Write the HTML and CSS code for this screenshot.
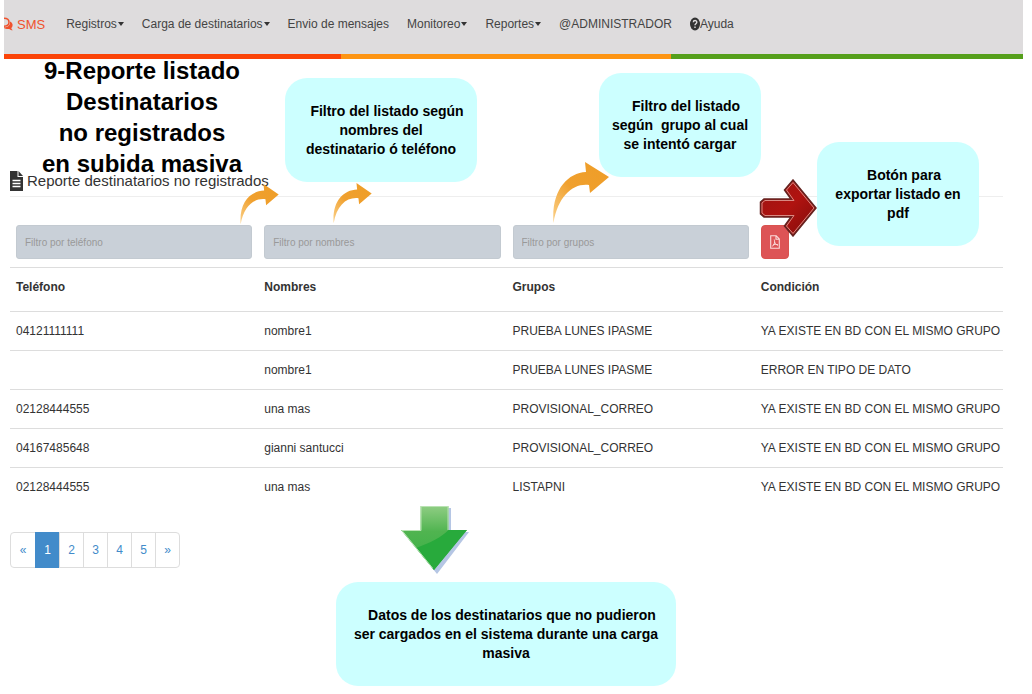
FILE: index.html
```html
<!DOCTYPE html>
<html lang="es">
<head>
<meta charset="utf-8">
<title>Reporte destinatarios no registrados</title>
<link rel="stylesheet" href="styles.css">
</head>
<body>
<header class="topbar">
  <nav class="nav">
    <a class="brand" href="#">
      <svg class="brand-icon" viewBox="0 0 9 16" aria-hidden="true"><path d="M0 2.300C3 2.300 5 4 5 6.300S3 10.200 0 10.200" fill="none" stroke="#f0522d" stroke-width="1.500"/><path d="M6 5.500C8 6.500 9 8 8.500 10c-.2 1-.7 1.600-1.200 2 .1 1 .7 1.500 1.500 2.300-1.500 0-2.600-.5-3.500-1.300-2 .2-4 0-5.300-1v-.8C3.500 11.500 6.500 9.500 6 5.500z" fill="#f0522d"/></svg>
      <span>SMS</span>
    </a>
    <a class="nav-link" href="#">Registros<i class="caret"></i></a>
    <a class="nav-link" href="#">Carga de destinatarios<i class="caret"></i></a>
    <a class="nav-link" href="#">Envio de mensajes</a>
    <a class="nav-link" href="#">Monitoreo<i class="caret"></i></a>
    <a class="nav-link" href="#">Reportes<i class="caret"></i></a>
    <a class="nav-link" href="#">@ADMINISTRADOR</a>
    <a class="nav-link" href="#"><svg class="help-icon" viewBox="0 0 10 14" aria-hidden="true"><ellipse cx="5" cy="7" rx="5" ry="6.500" fill="#333"/><path d="M3.300 5.200C3.400 3 6.800 3 6.800 5.200 6.800 6.800 5 6.800 5 8.300M5 9.500v1.500" fill="none" stroke="#dedcdd" stroke-width="1.400"/></svg>Ayuda</a>
  </nav>
  <div class="stripe"><span class="red"></span><span class="orange"></span><span class="green"></span></div>
</header>

<main class="content">
  <h1 class="page-title">
    <svg class="file-icon" viewBox="0 0 13 20" aria-hidden="true"><path d="M0 0h7.500v6H13v14H0z" fill="#333"/><path d="M8.500 0L13 5H8.500z" fill="#333"/><path d="M2.500 9.500h8M2.500 12.500h8M2.500 15.500h8" stroke="#fff" stroke-width="1.300"/></svg>
    Reporte destinatarios no registrados
  </h1>
  <form class="filters">
    <div class="cell"><input class="filter" type="text" aria-label="Filtro por teléfono" placeholder="Filtro por teléfono"></div>
    <div class="cell"><input class="filter" type="text" aria-label="Filtro por nombres" placeholder="Filtro por nombres"></div>
    <div class="cell"><input class="filter" type="text" aria-label="Filtro por grupos" placeholder="Filtro por grupos"></div>
    <div class="cell"><button class="pdf" type="button" aria-label="Exportar a pdf"><svg class="pdf-icon" viewBox="0 0 10 14" aria-hidden="true"><path d="M.7.700h5.500L9.300 4v9.300H.700zM6 1v3.300h3" fill="none" stroke="#fbdcdc" stroke-width="1.100"/><path d="M4.200 4.500C5.500 8 3.500 10.500 2 11.500M4.500 7c1 2 2 3 3.500 3M3 10c1.500-.8 3-.8 5 0" fill="none" stroke="#fbdcdc"/></svg></button></div>
  </form>
  <table class="report">
    <thead>
      <tr><th>Teléfono</th><th>Nombres</th><th>Grupos</th><th>Condición</th></tr>
    </thead>
    <tbody>
      <tr><td>04121111111</td><td>nombre1</td><td>PRUEBA LUNES IPASME</td><td>YA EXISTE EN BD CON EL MISMO GRUPO</td></tr>
      <tr><td></td><td>nombre1</td><td>PRUEBA LUNES IPASME</td><td>ERROR EN TIPO DE DATO</td></tr>
      <tr><td>02128444555</td><td>una mas</td><td>PROVISIONAL_CORREO</td><td>YA EXISTE EN BD CON EL MISMO GRUPO</td></tr>
      <tr><td>04167485648</td><td>gianni santucci</td><td>PROVISIONAL_CORREO</td><td>YA EXISTE EN BD CON EL MISMO GRUPO</td></tr>
      <tr><td>02128444555</td><td>una mas</td><td>LISTAPNI</td><td>YA EXISTE EN BD CON EL MISMO GRUPO</td></tr>
    </tbody>
  </table>
  <nav class="pages" aria-label="Páginas">
    <a href="#">«</a><a class="current" href="#">1</a><a href="#">2</a><a href="#">3</a><a href="#">4</a><a href="#">5</a><a href="#">»</a>
  </nav>
</main>

<h2 class="slide-title">9-Reporte listado<br>Destinatarios<br>no registrados<br>en subida masiva</h2>

<p class="callout names">Filtro del listado según<br>nombres del<br>destinatario ó teléfono</p>
<p class="callout groups">Filtro del listado<br>según&nbsp; grupo al cual<br>se intentó cargar</p>
<p class="callout export">Botón para<br>exportar listado en<br>pdf</p>
<p class="callout data">Datos de los destinatarios que no pudieron<br>ser cargados en el sistema durante una carga<br>masiva</p>

<svg class="arrow curve-phone" viewBox="0 0 58 62" aria-hidden="true"><defs><linearGradient id="gold" x1="0" y1="1" x2="1" y2="0"><stop offset="0" stop-color="#fbd28b"/><stop offset=".45" stop-color="#f0a02e"/><stop offset="1" stop-color="#ee9d27"/></linearGradient></defs><path d="M.500 61C-2 29 14 11 36 10L35 0 58 16 39 32 38 23C20 21 5 34 .500 61z" fill="url(#gold)"/></svg>
<svg class="arrow curve-names" viewBox="0 0 58 62" aria-hidden="true"><path d="M.500 61C-2 29 14 11 36 10L35 0 58 16 39 32 38 23C20 21 5 34 .500 61z" fill="url(#gold)"/></svg>
<svg class="arrow curve-groups" viewBox="0 0 58 62" aria-hidden="true"><path d="M.500 61C-2 29 14 11 33 10L32 0 56 15 37 31 36 23C20 21 5 34 .500 61z" fill="url(#gold)"/></svg>
<svg class="arrow red-arrow" viewBox="0 0 58 58" aria-hidden="true"><defs><linearGradient id="crimson" x1="0" y1="0" x2="1" y2="1"><stop offset="0" stop-color="#9c1512"/><stop offset=".5" stop-color="#b01310"/><stop offset="1" stop-color="#7d0c0b"/></linearGradient></defs><path d="M5 20H32L25.500 11 34 1 57 29 34 57 25.500 47 32 38H5L1.500 35V23z" fill="url(#crimson)" stroke="#642320" stroke-width="1.500"/><path d="M6 21.500H35L27.500 11 34 3.500 55 29 34 54.500 27.500 47 35 36.500H6L3 34V24z" fill="none" stroke="#d98982" stroke-width="1"/></svg>
<svg class="arrow green-arrow" viewBox="0 0 70 70" aria-hidden="true"><defs><linearGradient id="leaf" x1="0" y1="0" x2="0" y2="1"><stop offset="0" stop-color="#8fcd83"/><stop offset=".4" stop-color="#50b450"/><stop offset="1" stop-color="#35b044"/></linearGradient></defs><path d="M23 3H51V27H69L37 69 3 27H23z" fill="#b5c6e4"/><path d="M20.500 1H48.500V25H67L34 65 1 25H20.500z" fill="url(#leaf)"/><path d="M48.500 25H67L34 65 16 43C30 38 42 32 48.500 25z" fill="#28aa3c"/><path d="M32.500 63L2 25.500H21V1.500H48V25" fill="none" stroke="#b8e3b2" stroke-width="1"/></svg>
</body>
</html>
```
FILE: styles.css
```css
* { box-sizing: border-box; }

body {
  margin: 0;
  min-height: 100vh;
  position: relative;
  background: #fff;
  color: #333;
  font-family: "Liberation Sans", Arial, sans-serif;
  font-size: 12px;
}

a { text-decoration: none; }

.topbar { margin: 0 9px 0 4px; background: #dedcdd; }

.nav {
  display: flex;
  align-items: center;
  gap: 18px;
  height: 54px;
  padding-bottom: 6px;
}

.brand { display: flex; align-items: center; gap: 4px; margin-right: 3px; color: #f0522d; font-size: 13px; }
.brand-icon { width: 9px; height: 16px; }
.nav-link { display: flex; align-items: center; color: #444; }
.help-icon { width: 10px; height: 14px; }

.caret {
  margin-left: 1px;
  border: 3px solid transparent;
  border-top: 4px solid #333;
  border-bottom: 0;
}

.stripe { display: flex; height: 5px; }
.stripe .red { flex: 337; background: #fb4408; }
.stripe .orange { flex: 330; background: #fd9412; }
.stripe .green { flex: 352; background: #559f1b; }

.content { padding: 110px 29px 0 10px; }

.page-title {
  display: flex;
  align-items: center;
  gap: 4px;
  margin: 0 0 28px;
  padding-bottom: 4px;
  border-bottom: 1px solid #eee;
  font-size: 15px;
  line-height: 23px;
  font-weight: 400;
}
.file-icon { width: 13px; height: 20px; }

.filters { display: grid; grid-template-columns: repeat(4, 1fr); margin: 0 0 8px; }
.cell { padding: 0 6px; }

.filter {
  display: block;
  width: 100%;
  height: 34px;
  padding: 0 8px;
  border: 1px solid #c3cad1;
  border-radius: 3px;
  background: #c9d0d8;
  color: #444;
  font-family: inherit;
  font-size: 10px;
}
.filter::placeholder { color: #999; opacity: 1; }

.pdf {
  display: flex;
  align-items: center;
  justify-content: center;
  width: 28px;
  height: 34px;
  padding: 0;
  border: 1px solid #d9534f;
  border-radius: 4px;
  background: #dd5456;
}
.pdf-icon { width: 10px; height: 14px; }

.report { width: 100%; table-layout: fixed; border-collapse: collapse; }
.report th, .report td {
  height: 39px;
  padding: 0 0 0 6px;
  border-top: 1px solid #ddd;
  text-align: left;
  white-space: nowrap;
}
.report th { height: 44px; padding-bottom: 5px; }

.pages { display: flex; width: max-content; margin-top: 25px; border: 1px solid #ddd; border-radius: 4px; }
.pages a {
  width: 24px;
  color: #428bca;
  line-height: 34px;
  text-align: center;
  border-left: 1px solid #ddd;
}
.pages a:first-child { border-left: 0; }
.pages .current { margin: -1px 0; background: #428bca; border-color: #428bca; color: #fff; line-height: 36px; }

/* Annotations drawn over the page */
.slide-title {
  position: absolute;
  left: 32px;
  top: 55px;
  width: 220px;
  margin: 0;
  color: #000;
  font-size: 24px;
  line-height: 31px;
  text-align: center;
  white-space: nowrap;
}

.callout {
  position: absolute;
  display: block;
  margin: 0;
  padding: 24px 0 23px;
  border-radius: 22px;
  background: #cff;
  color: #000;
  font-size: 14px;
  font-weight: 700;
  line-height: 19px;
  text-align: center;
  text-indent: 12px;
  white-space: nowrap;
}
.names { left: 285px; top: 78px; width: 192px; }
.groups { left: 599px; top: 73px; width: 162px; }
.export { left: 817px; top: 142px; width: 162px; }
.data { left: 336px; top: 582px; width: 340px; }

.arrow { position: absolute; }
.curve-phone { left: 240px; top: 184px; width: 39px; height: 41px; }
.curve-names { left: 333px; top: 183px; width: 39px; height: 41px; }
.curve-groups { left: 552px; top: 162px; width: 60px; height: 62px; }
.red-arrow { left: 759px; top: 179px; width: 58px; height: 58px; }
.green-arrow { left: 400px; top: 505px; width: 70px; height: 70px; }
```
